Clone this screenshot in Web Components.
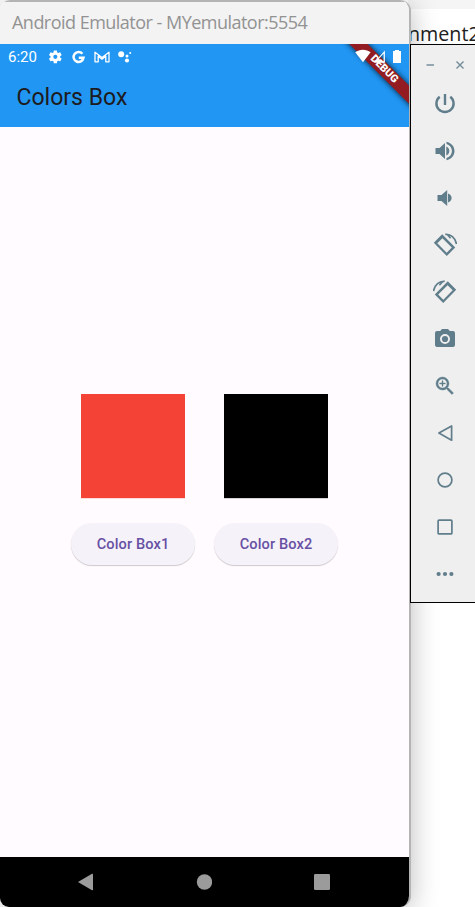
<!DOCTYPE html>
<html lang="en">
<head>
<meta charset="utf-8">
<title>Android Emulator</title>
<style>
html,body{margin:0;height:907px;overflow:hidden;background:#fff}
</style>
</head>
<body>
<emulator-desktop></emulator-desktop>
<script>
const define = (name, html) => customElements.define(name, class extends HTMLElement {
  constructor() {
    super();
    const t = document.createElement('template');
    t.innerHTML = html;
    this.attachShadow({mode: 'open'}).appendChild(t.content.cloneNode(true));
  }
});

const rotate = '<path fill-rule="evenodd" d="M9.200 1.200 22.200 14.400 13.800 23 .8 9.800zM9.400 5.200 4.300 10.300 13.700 19.700 18.800 14.600z"/><path fill="none" stroke="currentColor" stroke-width="1.600" d="M12.300 1.400c5.400-.6 10 3.400 11.200 9.600M14.400 1.800l3.200 3.400"/>';
const glyphs = {
  power: '<path fill="none" stroke="currentColor" stroke-width="2.400" d="M6.700 4.700a8.600 8.600 0 1 0 10.600 0M12 2v11"/>',
  volumeUp: '<path d="M2.500 9v6h4l5.500 5V4L6.500 9h-4zM13.300 7.500v9c1.900-.8 3-2.500 3-4.500s-1.100-3.700-3-4.500zM13.500 2.700v2.400c3.100.8 5.400 3.600 5.400 6.900s-2.300 6.100-5.400 6.900v2.400c4.600-.9 8-4.800 8-9.300s-3.400-8.400-8-9.300z"/>',
  volumeDown: '<path d="M4.500 9v6h4l5.700 5V4L8.500 9h-4zM15 7.500v9c2.300-.7 3.600-2.400 3.600-4.500S17.300 8.200 15 7.500z"/>',
  rotateLeft: rotate,
  rotateRight: '<g transform="matrix(-1 0 0 1 24 0)">' + rotate + '</g>',
  camera: '<path fill-rule="evenodd" d="M9 2 7.200 4H4a2 2 0 0 0-2 2v12c0 1.100.9 2 2 2h16a2 2 0 0 0 2-2V6a2 2 0 0 0-2-2h-3.200L15 2H9zm3 5a5 5 0 1 1 0 10 5 5 0 0 1 0-10z"/><circle cx="12" cy="12" r="3.100"/>',
  zoom: '<path d="M15.500 14h-.79l-.28-.27A6.470 6.470 0 0 0 16 9.500 6.500 6.500 0 1 0 9.500 16c1.610 0 3.090-.59 4.230-1.570l.27.28v.79l5 4.990L20.490 19l-4.990-5zm-6 0C7.010 14 5 11.990 5 9.500S7.010 5 9.500 5 14 7.010 14 9.500 11.990 14 9.500 14zM12.300 9h-2.300V6.700H9V9H6.700v1H9v2.300h1V10h2.300z" stroke="currentColor" stroke-width=".4"/>',
  back: '<path fill="none" stroke="currentColor" stroke-width="1.700" stroke-linejoin="round" d="M18.600 5v14.200L5.900 12.100z"/>',
  home: '<circle cx="12" cy="12" r="6.900" fill="none" stroke="currentColor" stroke-width="1.700"/>',
  overview: '<rect x="5.100" y="5.100" width="13.800" height="13.800" rx="1" fill="none" stroke="currentColor" stroke-width="1.700"/>',
  more: '<circle cx="5.600" cy="12" r="2.100"/><circle cx="12" cy="12" r="2.100"/><circle cx="18.400" cy="12" r="2.100"/>'
};
customElements.define('tool-icon', class extends HTMLElement {
  constructor() { super(); this.attachShadow({mode: 'open'}); }
  connectedCallback() {
    const s = this.getAttribute('size') || 24;
    this.shadowRoot.innerHTML = `<style>:host{display:flex;align-items:center;justify-content:center;height:47px;color:#607d8b}svg{display:block}</style>
      <svg width="${s}" height="${s}" viewBox="0 0 24 24" fill="currentColor">${glyphs[this.getAttribute('name')]}</svg>`;
  }
});

define('title-bar', `<style>
:host{display:flex;align-items:center;height:44px;box-sizing:border-box;padding:0 0 2px 12px;background:#f3f3f3;color:#929292;font:18px/24px "Open Sans","Noto Sans",sans-serif;white-space:nowrap;border-top:2px solid #b4b4b4}
span{letter-spacing:-.52px}
</style><span><slot></slot></span>`);

define('status-bar', `<style>
:host{display:flex;align-items:center;height:26px;padding:0 8px;box-sizing:border-box;color:#fff;font:15px/26px Roboto,sans-serif}
svg{display:block;flex:none}
.time{width:40px}
</style>
<span class="time">6:20</span>
<svg width="92" height="26" viewBox="48 44 92 26" fill="#fff">
<g transform="translate(47.300 48.800) scale(.67)"><path d="M19.140 12.940c.04-.3.060-.61.060-.94s-.02-.64-.07-.94l2.030-1.580c.18-.14.230-.41.120-.61l-1.920-3.320c-.12-.22-.37-.29-.59-.22l-2.390.96c-.5-.38-1.030-.7-1.620-.94l-.36-2.540c-.04-.24-.24-.41-.48-.41h-3.840c-.24 0-.43.170-.47.410l-.36 2.540c-.59.240-1.130.57-1.620.94l-2.390-.96c-.22-.08-.47 0-.59.220L2.740 8.870c-.12.210-.08.470.12.610l2.030 1.580c-.05.300-.09.630-.09.940s.02.640.07.940l-2.030 1.580c-.18.140-.23.410-.12.610l1.920 3.320c.12.220.37.290.59.220l2.390-.96c.5.380 1.030.7 1.620.94l.36 2.540c.05.240.24.410.48.410h3.840c.24 0 .44-.17.470-.41l.36-2.540c.59-.24 1.130-.56 1.620-.94l2.390.96c.22.080.47 0 .59-.22l1.920-3.320c.12-.22.070-.47-.12-.61l-2.010-1.580zM12 15.100A3.100 3.100 0 1 1 12 8.900a3.100 3.100 0 0 1 0 6.200z"/></g>
<path d="M82.400 53.700a5 5 0 1 0 1.100 4.100H78.800" fill="none" stroke="#fff" stroke-width="2.500"/>
<path d="M95 52.200l7 5.300 7-5.300v9.600h-3.200v-5.600L102 59.200l-3.800-3v5.600H95z" fill="none" stroke="#fff" stroke-width="1.300" stroke-linejoin="round"/>
<circle cx="121.200" cy="54.300" r="3"/><circle cx="127" cy="56" r="1.500"/><circle cx="130.200" cy="53" r="1"/><circle cx="127" cy="60.500" r="2.100"/>
</svg>`);

define('debug-banner', `<style>
:host{position:absolute;top:0;right:0;width:76px;height:76px;overflow:hidden;display:block}
.band{position:absolute;left:-9px;top:18.700px;width:120px;height:12.600px;background:#921c21;box-shadow:0 0 5px 1px #0009;transform:rotate(45deg);text-align:center;color:#fff;font:900 10.700px/12.600px Roboto,sans-serif}
svg{position:absolute;right:0;top:0}
</style>
<div class="band">DEBUG</div>
<svg width="60" height="26" viewBox="349 44 60 26" fill="#fff"><path d="M355.200 52.300c4.300-3.400 11.100-3.400 15.400 0L363 62.200z"/><path d="M384.900 50.500v12.300h-11zM383.600 53.600l-4.800 5.500 4.800 2.500z" fill-rule="evenodd"/><path d="M395 50h4v1.100h2V63h-8V51.100h2z"/></svg>`);

define('app-bar', `<style>
:host{display:block;position:relative;height:83px;background:#2196f3;overflow:hidden}
h1{margin:0;padding:10px 0 0 16.500px;font:400 23px/36px Roboto,sans-serif;color:#1d1b20}
</style><status-bar></status-bar><h1><slot></slot></h1><debug-banner></debug-banner>`);

define('color-box', `<style>
:host{display:block;width:104px;height:104px;background:var(--fill);box-shadow:0 .4px 0 var(--edge)}
</style>`);

define('pill-button', `<style>
:host{display:block;box-sizing:border-box;width:124px;height:42px;border-radius:21px;background:#f6f2f9;box-shadow:0 1px 1px #0003;color:#6750a4;text-align:center;font:500 14.600px/42px Roboto,sans-serif;letter-spacing:.1px}
</style><slot></slot>`);

define('box-column', `<style>
:host{display:flex;flex-direction:column;align-items:center;gap:25px}
</style><slot></slot>`);

define('nav-bar', `<style>
:host{display:flex;align-items:center;justify-content:space-between;height:50px;padding:0 79px 0 77px;background:#000;box-sizing:border-box}
svg{display:block}
</style>
<svg width="16" height="18" fill="#9b9b9b"><path d="M1 9 15 .8Q16 .5 16 1.500V16.500Q16 17.500 15 17.200Z"/></svg>
<svg width="16" height="16" fill="#9b9b9b"><circle cx="8.500" cy="8" r="7.700"/></svg>
<svg width="16" height="16" fill="#9b9b9b"><rect width="16" height="16" rx="1.200"/></svg>`);

define('phone-window', `<style>
:host{display:flex;flex-direction:column;box-sizing:border-box;width:411px;height:907px;border-right:2px solid #b4b4b4;border-radius:10px 11px 11px 9px;overflow:hidden;position:relative;z-index:1;background:#fffbff;box-shadow:0 4px 28px #0004}
main{flex:1;display:flex;justify-content:center;align-items:flex-start;gap:19px;padding-top:267px;box-sizing:border-box}
</style>
<title-bar>Android Emulator - MYemulator:5554</title-bar>
<app-bar>Colors Box</app-bar>
<main>
<box-column><color-box style="--fill:#f44336;--edge:#faa"></color-box><pill-button>Color Box1</pill-button></box-column>
<box-column><color-box style="--fill:#000;--edge:#999"></color-box><pill-button>Color Box2</pill-button></box-column>
</main>
<nav-bar></nav-bar>`);

define('side-tools', `<style>
:host{display:block;box-sizing:border-box;width:69px;height:559px;border:1px solid #000;border-right:0;background:#efefef;position:relative;z-index:2}
.win{display:flex;height:35px;padding:5px 0 0 15px;box-sizing:border-box}
svg{display:block}
</style>
<div class="win"><svg width="44" height="30" fill="none" stroke="#8499a4" stroke-width="1.700"><path d="M.5 15H8"/><path stroke="#718b98" stroke-width="1.400" d="m30.500 11.500 7 7m0-7-7 7"/></svg></div>
<tool-icon name="power"></tool-icon><tool-icon name="volumeUp"></tool-icon><tool-icon name="volumeDown"></tool-icon><tool-icon name="rotateLeft"></tool-icon><tool-icon name="rotateRight"></tool-icon><tool-icon name="camera"></tool-icon><tool-icon name="zoom"></tool-icon><tool-icon name="back"></tool-icon><tool-icon name="home"></tool-icon><tool-icon name="overview"></tool-icon><tool-icon name="more"></tool-icon>`);

define('emulator-desktop', `<style>
:host{display:flex;width:475px;height:907px;overflow:hidden;background:#fff}
aside{width:65px;margin-left:-1px;flex:none}
phone-window{flex:none}
.behind{height:44px;box-sizing:border-box;border-top:9px solid #f5f5f5;padding:12px 0 0;margin-left:-2px;color:#202020;font:19.700px/26px "Open Sans","Noto Sans",sans-serif;white-space:nowrap}
</style>
<phone-window></phone-window>
<aside><div class="behind">nment2</div><side-tools></side-tools></aside>`);
</script>
</body>
</html>
